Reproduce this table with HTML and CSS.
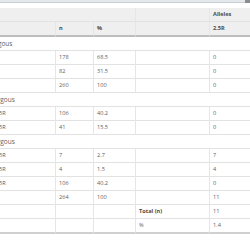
FILE: index.html
```html
<!DOCTYPE html>
<html>
<head>
<meta charset="utf-8">
<link rel="stylesheet" href="styles.css">
</head>
<body>
<div class="topbar"><span class="corner"></span></div>
<div class="wrap">
<table class="grid">
<colgroup>
<col class="c-label"><col class="c-n"><col class="c-pct"><col class="c-blank"><col class="c-allele">
</colgroup>
<thead>
<tr class="h1"><th colspan="3" class="lab"></th><th class="vl"></th><th class="vl">Alleles</th></tr>
<tr class="h2"><th class="lab"></th><th class="vl">n</th><th class="vl">%</th><th class="vl"></th><th class="vl">2.5R</th></tr>
</thead>
<tbody>
<tr class="grp"><td colspan="5" class="lab">Homozygous</td></tr>
<tr><td class="lab">2R</td><td class="vl">178</td><td class="vl">68.5</td><td class="vl"></td><td class="vl">0</td></tr>
<tr><td class="lab">3R</td><td class="vl">82</td><td class="vl">31.5</td><td class="vl"></td><td class="vl">0</td></tr>
<tr><td class="lab">Total</td><td class="vl">260</td><td class="vl">100</td><td class="vl"></td><td class="vl">0</td></tr>
<tr class="grp"><td colspan="5" class="lab">Heterozygous</td></tr>
<tr><td class="lab">3.5R/3.5R</td><td class="vl">106</td><td class="vl">40.2</td><td class="vl"></td><td class="vl">0</td></tr>
<tr><td class="lab">3.5R/4.5R</td><td class="vl">41</td><td class="vl">15.5</td><td class="vl"></td><td class="vl">0</td></tr>
<tr class="grp"><td colspan="5" class="lab">Heterozygous</td></tr>
<tr><td class="lab">2.5R/3.5R</td><td class="vl">7</td><td class="vl">2.7</td><td class="vl"></td><td class="vl">7</td></tr>
<tr><td class="lab">2.5R/4.5R</td><td class="vl">4</td><td class="vl">1.5</td><td class="vl"></td><td class="vl">4</td></tr>
<tr><td class="lab">4.5R/4.5R</td><td class="vl">106</td><td class="vl">40.2</td><td class="vl"></td><td class="vl">0</td></tr>
<tr><td class="lab">Total</td><td class="vl">264</td><td class="vl">100</td><td class="vl"></td><td class="vl">11</td></tr>
<tr><td class="lab"></td><td class="vl"></td><td class="vl"></td><td class="vl bold">Total (n)</td><td class="vl">11</td></tr>
<tr class="last"><td class="lab"></td><td class="vl"></td><td class="vl"></td><td class="vl">%</td><td class="vl">1.4</td></tr>
</tbody>
</table>
</div>
</body>
</html>
```
FILE: styles.css
```css
html, body {
  margin: 0;
  padding: 0;
  background: #ffffff;
  overflow: hidden;
}
body {
  width: 250px;
  height: 250px;
  font-family: "Open Sans", "Liberation Sans", sans-serif;
}
.topbar {
  height: 2px;
  background: #e3e9ed;
  border-bottom: 1px solid #c9ced2;
  display: flex;
  justify-content: flex-end;
}
.corner {
  width: 5px;
  height: 3px;
  background: #8a8d90;
}
.wrap {
  padding-top: 5px;
  overflow: hidden;
}
.grid {
  margin-left: -24px;
  border-collapse: separate;
  border-spacing: 0;
  table-layout: fixed;
  width: 300px;
  font-size: 5.6px;
  color: #5f5f5f;
}
.c-label { width: 79px; }
.c-n { width: 38px; }
.c-pct { width: 42px; }
.c-blank { width: 74px; }
.c-allele { width: 67px; }
th, td {
  height: 13px;
  line-height: 13px;
  padding: 0 3px;
  text-align: left;
  white-space: nowrap;
  overflow: hidden;
  border-bottom: 1px solid #e2e2e2;
}
.lab { padding-left: 5px; }
.grp .lab { font-size: 6.5px; text-indent: -8px; }
.vl { border-left: 1px solid #e6e6e6; }
thead th {
  background: #efefef;
  font-weight: 700;
  color: #4a4a4a;
}
.h2 th {
  border-bottom: 2px solid #bdbdbd;
}
.grp td { border-left: none; }
.bold { font-weight: 700; color: #4a4a4a; }
.last td { border-bottom: 2px solid #d0d0d0; }
```
